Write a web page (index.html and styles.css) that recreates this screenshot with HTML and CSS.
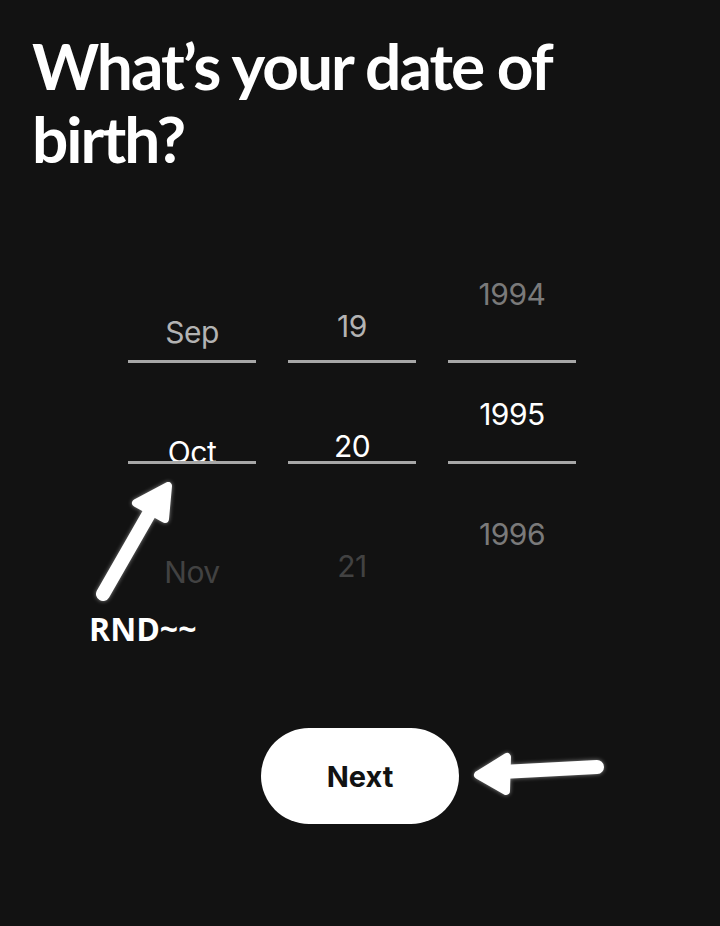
FILE: index.html
```html
<!DOCTYPE html>
<html lang="en">
<head>
    <meta charset="UTF-8">
    <meta name="viewport" content="width=device-width, initial-scale=1.0">
    <title>Date of birth</title>
    <link rel="stylesheet" href="styles.css">
</head>
<body>
    <div class="screen">
        <h1 class="title">What’s your date of birth?</h1>

        <div class="picker">
            <div class="wheel wheel-month">
                <div class="item near">Sep</div>
                <div class="item active">Oct</div>
                <div class="item far">Nov</div>
                <span class="bar bar-top"></span>
                <span class="bar bar-bottom"></span>
            </div>
            <div class="wheel wheel-day">
                <div class="item near">19</div>
                <div class="item active">20</div>
                <div class="item far">21</div>
                <span class="bar bar-top"></span>
                <span class="bar bar-bottom"></span>
            </div>
            <div class="wheel wheel-year">
                <div class="item dim">1994</div>
                <div class="item active">1995</div>
                <div class="item dim">1996</div>
                <span class="bar bar-top"></span>
                <span class="bar bar-bottom"></span>
            </div>
        </div>

        <div class="actions">
            <button class="next-btn">Next</button>
        </div>

        <!-- hand drawn notes on top of the screenshot -->
        <svg class="notes" width="720" height="926" viewBox="0 0 720 926">
            <g fill="#fff" stroke="#fff" stroke-linecap="round" stroke-linejoin="round">
                <line x1="103" y1="594" x2="150" y2="512" stroke-width="14"/>
                <polygon points="136,503 168,486 165,519" stroke-width="8"/>
                <line x1="597" y1="767" x2="502" y2="772" stroke-width="14"/>
                <polygon points="478,775 507,757 506,791" stroke-width="8"/>
            </g>
        </svg>
        <div class="note-label">RND~~</div>
    </div>
</body>
</html>
```

FILE: styles.css
```css
body {
    margin: 0;
    background-color: #121212;
    font-family: Inter, "Noto Sans", sans-serif;
    color: #fff;
}

.screen {
    position: relative;
    width: 720px;
    height: 926px;
    overflow: hidden;
}

.title {
    margin: 0;
    padding: 29px 40px 0 32px;
    font-family: Lato, "Noto Sans", sans-serif;
    font-size: 64px;
    line-height: 73px;
    font-weight: 700;
    letter-spacing: -2px;
}

.picker {
    display: flex;
    gap: 32px;
    margin: 85px 0 0 128px;
    height: 340px;
}

.wheel {
    position: relative;
    width: 128px;
    display: flex;
    flex-direction: column;
    align-items: center;
}

.wheel-year {
    padding-top: 16px;
}

.wheel-day {
    padding-top: 48px;
}

.wheel-month {
    padding-top: 54px;
}

.item {
    flex-shrink: 0;
    height: 120px;
    font-size: 30px;
    line-height: 36px;
    letter-spacing: -0.5px;
}

.item.active {
    color: #fff;
}

.item.near {
    color: #b3b3b3;
}

.item.dim {
    color: #7a7a7a;
}

.item.far {
    color: #424242;
}

.bar {
    position: absolute;
    left: 0;
    right: 0;
    height: 3px;
    background-color: #a7a7a7;
}

.bar-top {
    top: 100px;
}

.bar-bottom {
    top: 201px;
}

.actions {
    display: flex;
    justify-content: center;
    margin-top: 128px;
}

.next-btn {
    width: 198px;
    height: 96px;
    border: none;
    border-radius: 48px;
    background-color: #fff;
    color: #121212;
    font-family: Inter, "Noto Sans", sans-serif;
    font-size: 29px;
    font-weight: 700;
    cursor: pointer;
}

.notes {
    position: absolute;
    top: 0;
    left: 0;
    filter: drop-shadow(0 0 2px rgba(255, 255, 255, 0.5));
}

.note-label {
    position: absolute;
    top: 607px;
    left: 89px;
    font-family: "Open Sans", sans-serif;
    font-size: 32px;
    font-weight: 700;
    line-height: 44px;
}
```
